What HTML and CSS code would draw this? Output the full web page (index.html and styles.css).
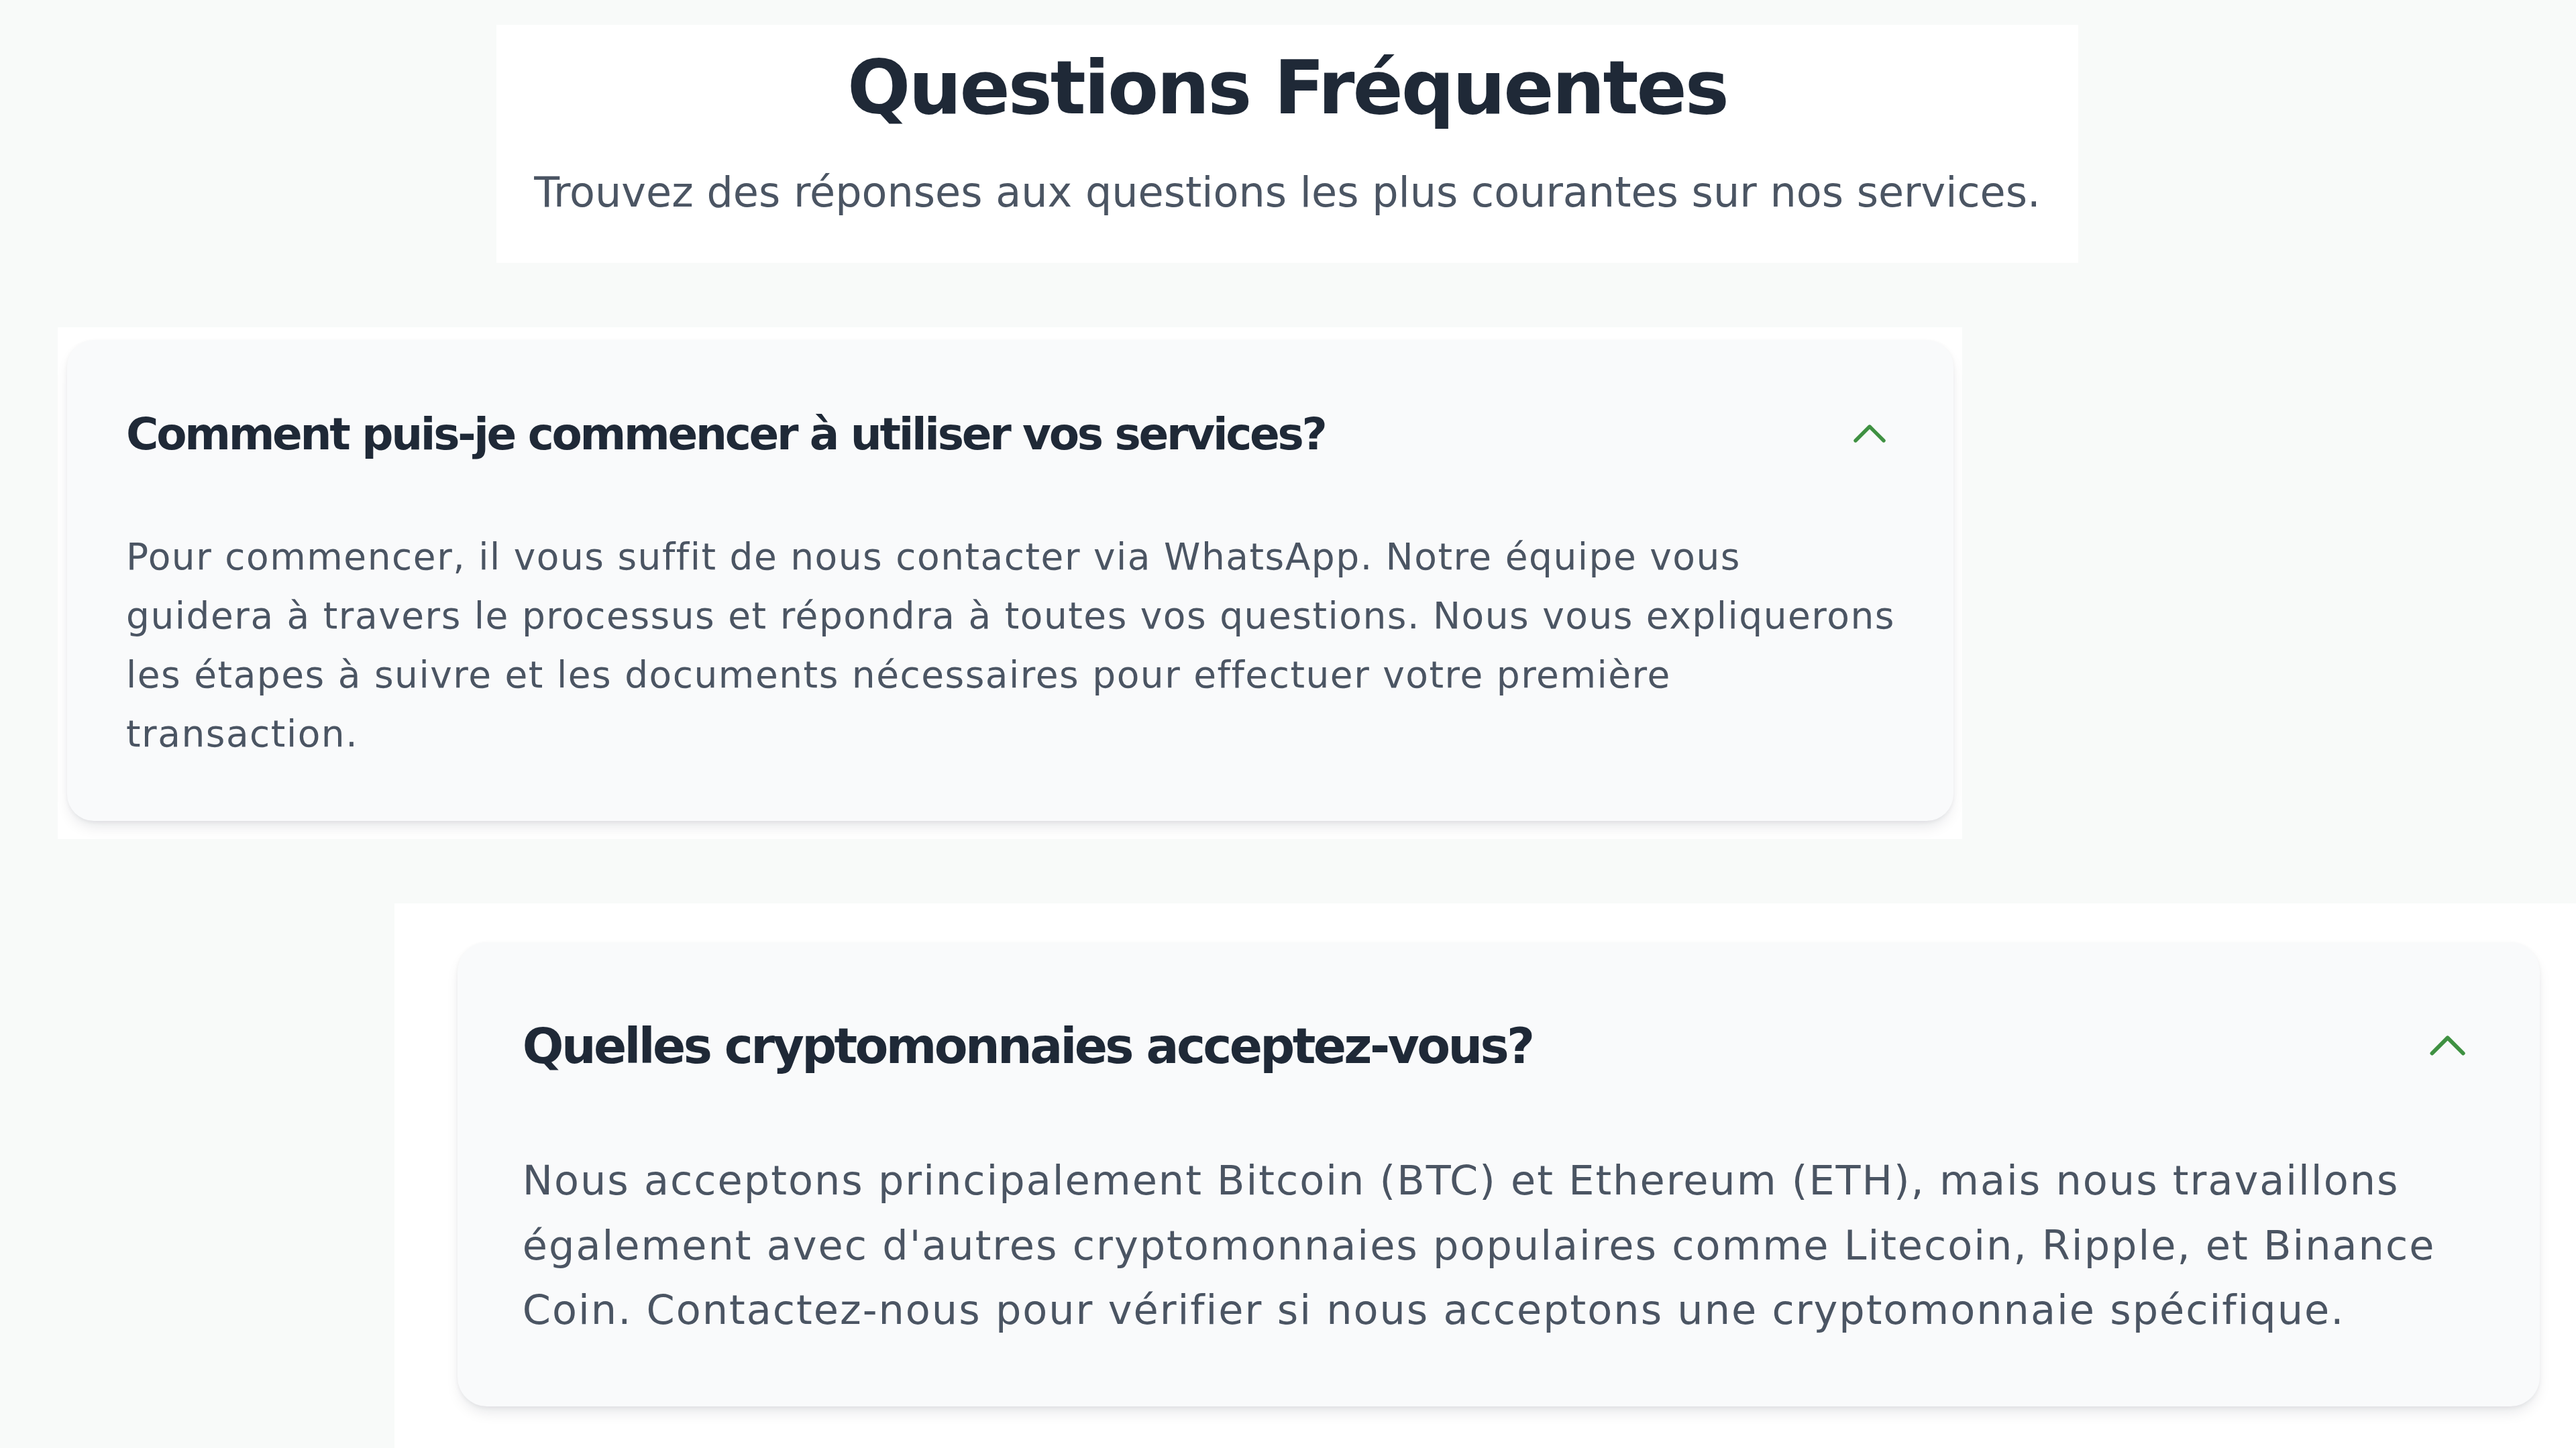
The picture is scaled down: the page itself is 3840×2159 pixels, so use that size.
FILE: index.html
```html
<!DOCTYPE html>
<html lang="fr">
<head>
<meta charset="utf-8">
<title>Questions Fréquentes</title>
<link rel="stylesheet" href="styles.css">
</head>
<body>
<main class="page">
  <header class="intro">
    <h2 class="intro-title">Questions Fréquentes</h2>
    <p class="intro-text">Trouvez des réponses aux questions les plus courantes sur nos services.</p>
  </header>

  <section class="reveal reveal--first">
    <article class="faq-card">
      <div class="faq-head">
        <h3 class="faq-q">Comment puis-je commencer à utiliser vos services?</h3>
        <svg class="faq-icon" viewBox="0 0 24 24" fill="none" stroke="currentColor" stroke-width="1.8" stroke-linecap="round" stroke-linejoin="round" aria-hidden="true"><path d="M5 15l7-7 7 7"/></svg>
      </div>
      <p class="faq-a faq-a--set">Pour commencer, il vous suffit de nous contacter via WhatsApp. Notre équipe vous<br>
      guidera à travers le processus et répondra à toutes vos questions. Nous vous expliquerons<br>
      les étapes à suivre et les documents nécessaires pour effectuer votre première<br>
      transaction.</p>
    </article>
  </section>

  <section class="reveal reveal--second">
    <article class="faq-card faq-card--lg">
      <div class="faq-head">
        <h3 class="faq-q">Quelles cryptomonnaies acceptez-vous?</h3>
        <svg class="faq-icon" viewBox="0 0 24 24" fill="none" stroke="currentColor" stroke-width="1.8" stroke-linecap="round" stroke-linejoin="round" aria-hidden="true"><path d="M5 15l7-7 7 7"/></svg>
      </div>
      <p class="faq-a">Nous acceptons principalement Bitcoin (BTC) et Ethereum (ETH), mais nous travaillons également avec d'autres cryptomonnaies populaires comme Litecoin, Ripple, et Binance Coin. Contactez-nous pour vérifier si nous acceptons une cryptomonnaie spécifique.</p>
    </article>
  </section>
</main>
</body>
</html>
```

FILE: styles.css
```css
html, body {
  margin: 0;
  padding: 0;
  height: 2159px;
  overflow: hidden;
}

body {
  background: #f8faf9;
  font-family: "DejaVu Sans", "Open Sans", sans-serif;
  color: #4b5563;
}

.page {
  display: flex;
  flex-direction: column;
  align-items: flex-start;
  gap: 96px;
  padding-top: 37px;
}

.intro {
  box-sizing: border-box;
  width: 2358px;
  margin-left: 740px;
  padding: 27px 0 59px;
  background: #ffffff;
  text-align: center;
}

.intro-title {
  margin: 0;
  font-size: 111px;
  line-height: 133px;
  font-weight: 700;
  letter-spacing: -3px;
  color: #1f2937;
}

.intro-text {
  margin: 43px 0 0;
  font-size: 62px;
  line-height: 93px;
  color: #4b5563;
}

.reveal {
  box-sizing: border-box;
  background: #ffffff;
}

.reveal--first {
  width: 2839px;
  margin-left: 86px;
  padding: 19px 13px 27px 14px;
}

.reveal--second {
  align-self: stretch;
  margin-left: 588px;
  padding: 58px 54px 80px 94px;
}

.faq-card {
  --s: 1;
  background: #f9fafb;
  border-radius: calc(40px * var(--s));
  box-shadow: 0 12px 24px -8px rgba(15, 23, 42, 0.14), 0 2px 6px rgba(15, 23, 42, 0.05);
  padding: calc(95px * var(--s)) calc(89px * var(--s)) calc(86px * var(--s)) calc(88px * var(--s));
}

.faq-card--lg {
  --s: 1.1;
}

.faq-head {
  display: flex;
  align-items: center;
  justify-content: space-between;
  gap: calc(40px * var(--s));
}

.faq-q {
  margin: 0;
  font-size: calc(66px * var(--s));
  line-height: calc(92px * var(--s));
  font-weight: 700;
  letter-spacing: calc(-3.3px * var(--s));
  color: #1f2937;
}

.faq-icon {
  flex: none;
  width: calc(72px * var(--s));
  height: calc(72px * var(--s));
  color: #3f9142;
}

.faq-a {
  margin: calc(92px * var(--s)) 0 0;
  font-size: calc(55px * var(--s));
  line-height: calc(88px * var(--s));
  letter-spacing: calc(1.8px * var(--s));
  color: #4b5563;
}

.faq-a--set {
  letter-spacing: 1.5px;
  white-space: nowrap;
}
```
